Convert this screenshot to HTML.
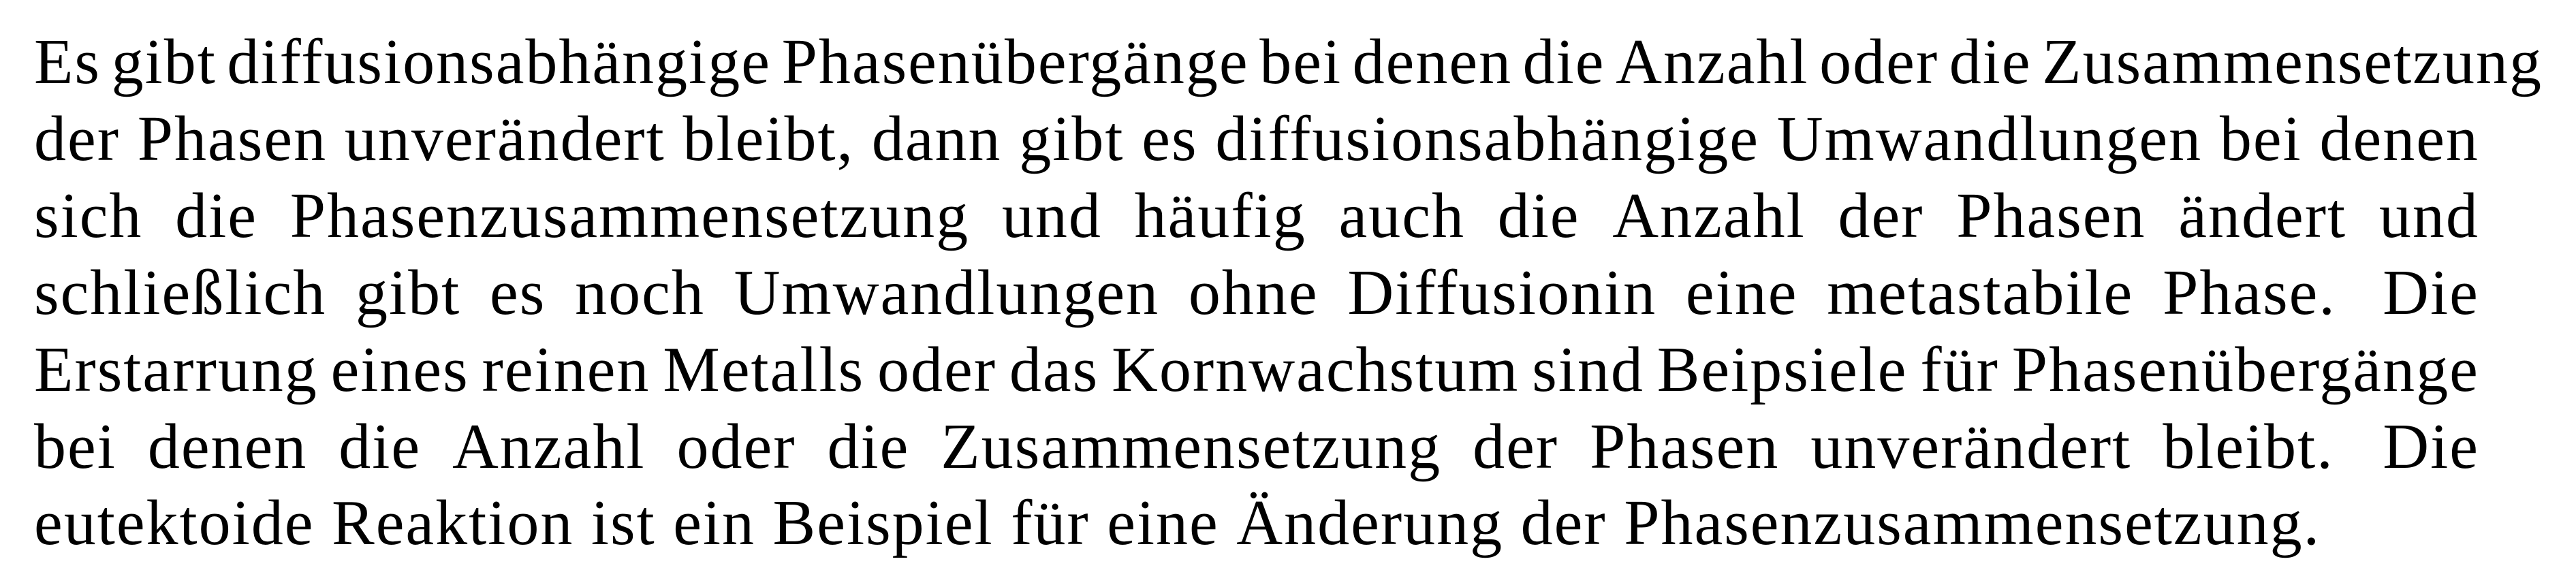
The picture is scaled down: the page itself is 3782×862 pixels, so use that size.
<!DOCTYPE html>
<html><head><meta charset="utf-8"><style>
html,body{margin:0;padding:0;background:#fff;}
body{width:3782px;height:862px;overflow:hidden;position:relative;font-family:"Liberation Serif",serif;font-size:94px;letter-spacing:2px;color:#000;}
.l{position:absolute;left:50px;width:3590px;display:flex;justify-content:space-between;white-space:nowrap;line-height:1;}
</style></head><body>
<div class="l" style="top:44px;width:3683px"><span>Es</span><span>gibt</span><span>diffusionsabhängige</span><span>Phasenübergänge</span><span>bei</span><span>denen</span><span>die</span><span>Anzahl</span><span>oder</span><span>die</span><span>Zusammensetzung</span></div>
<div class="l" style="top:157px"><span>der</span><span>Phasen</span><span>unverändert</span><span>bleibt,</span><span>dann</span><span>gibt</span><span>es</span><span>diffusionsabhängige</span><span>Umwandlungen</span><span>bei</span><span>denen</span></div>
<div class="l" style="top:270px"><span>sich</span><span>die</span><span>Phasenzusammensetzung</span><span>und</span><span>häufig</span><span>auch</span><span>die</span><span>Anzahl</span><span>der</span><span>Phasen</span><span>ändert</span><span>und</span></div>
<div class="l" style="top:383px"><span>schließlich</span><span>gibt</span><span>es</span><span>noch</span><span>Umwandlungen</span><span>ohne</span><span>Diffusionin</span><span>eine</span><span>metastabile</span><span>Phase.&nbsp;</span><span>Die</span></div>
<div class="l" style="top:496px"><span>Erstarrung</span><span>eines</span><span>reinen</span><span>Metalls</span><span>oder</span><span>das</span><span>Kornwachstum</span><span>sind</span><span>Beipsiele</span><span>für</span><span>Phasenübergänge</span></div>
<div class="l" style="top:609px"><span>bei</span><span>denen</span><span>die</span><span>Anzahl</span><span>oder</span><span>die</span><span>Zusammensetzung</span><span>der</span><span>Phasen</span><span>unverändert</span><span>bleibt.&nbsp;</span><span>Die</span></div>
<div class="l" style="top:721px;display:block;width:auto;word-spacing:0px">eutektoide Reaktion ist ein Beispiel für eine Änderung der Phasenzusammensetzung.</div>
</body></html>
